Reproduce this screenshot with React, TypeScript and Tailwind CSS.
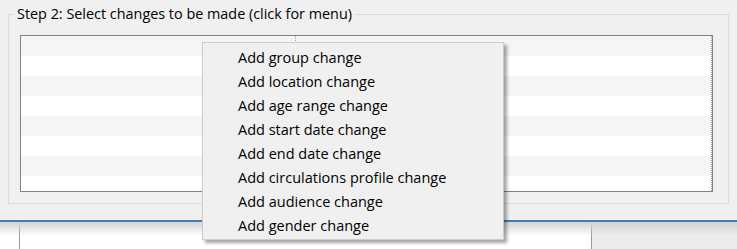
import React from "react";

const items = [
  "Add group change",
  "Add location change",
  "Add age range change",
  "Add start date change",
  "Add end date change",
  "Add circulations profile change",
  "Add audience change",
  "Add gender change",
];

export default function App() {
  const rows = [0, 1, 2, 3, 4, 5, 6, 7];
  return (
    <div
      className="relative w-[737px] h-[249px] overflow-hidden bg-[#f0f0f0] text-black"
      style={{ fontFamily: '"Open Sans", "Noto Sans", sans-serif' }}
    >
      {/* top panel */}
      <div className="h-[220px] pt-[14px] pl-[8px]">
        <div className="relative w-[721px] h-[190px] border border-[#dcdcdc]">
          <div className="absolute left-[5px] top-[-11px] bg-[#f0f0f0] px-[3px] text-[14.4px] leading-[20px] whitespace-nowrap">
            Step 2: Select changes to be made (click for menu)
          </div>
          <div className="ml-[11px] mt-[20px] w-[693px] h-[157px] border border-[#828282] bg-white overflow-hidden relative">
            <div className="flex flex-col">
              {rows.map((r) => (
                <div
                  key={r}
                  className={r % 2 === 0 ? "h-[20px] bg-[#f5f5f5]" : "h-[20px] bg-white"}
                />
              ))}
            </div>
            <div className="absolute left-[274px] top-0 h-full border-l border-dotted border-[#a0a0a0]" />
            <div className="absolute right-0 top-0 h-full border-l border-dotted border-[#a0a0a0]" />
          </div>
        </div>
      </div>
      {/* bottom area */}
      <div className="relative h-[29px] border-t-2 border-[#3f7fb6] bg-white flex">
        <div className="w-[20px] border-r border-[#9a9a9a]" />
        <div className="w-[572px] border-r border-[#9a9a9a]" />
        <div className="flex-1 bg-[#ececec]" />
        <div className="absolute left-0 top-0 w-full h-[14px] bg-gradient-to-b from-[#d4d4d4] to-transparent pointer-events-none" />
      </div>
      {/* context menu */}
      <div className="absolute left-[202px] top-[42px] w-[302px] h-[198px] bg-[#f0f0f0] border border-[#cccccc] pt-[3px] shadow-[3px_3px_3px_rgba(0,0,0,0.35)]">
        {items.map((t) => (
          <div key={t} className="h-[24px] pl-[35px] text-[14.5px] leading-[24px] whitespace-nowrap">
            {t}
          </div>
        ))}
      </div>
    </div>
  );
}
